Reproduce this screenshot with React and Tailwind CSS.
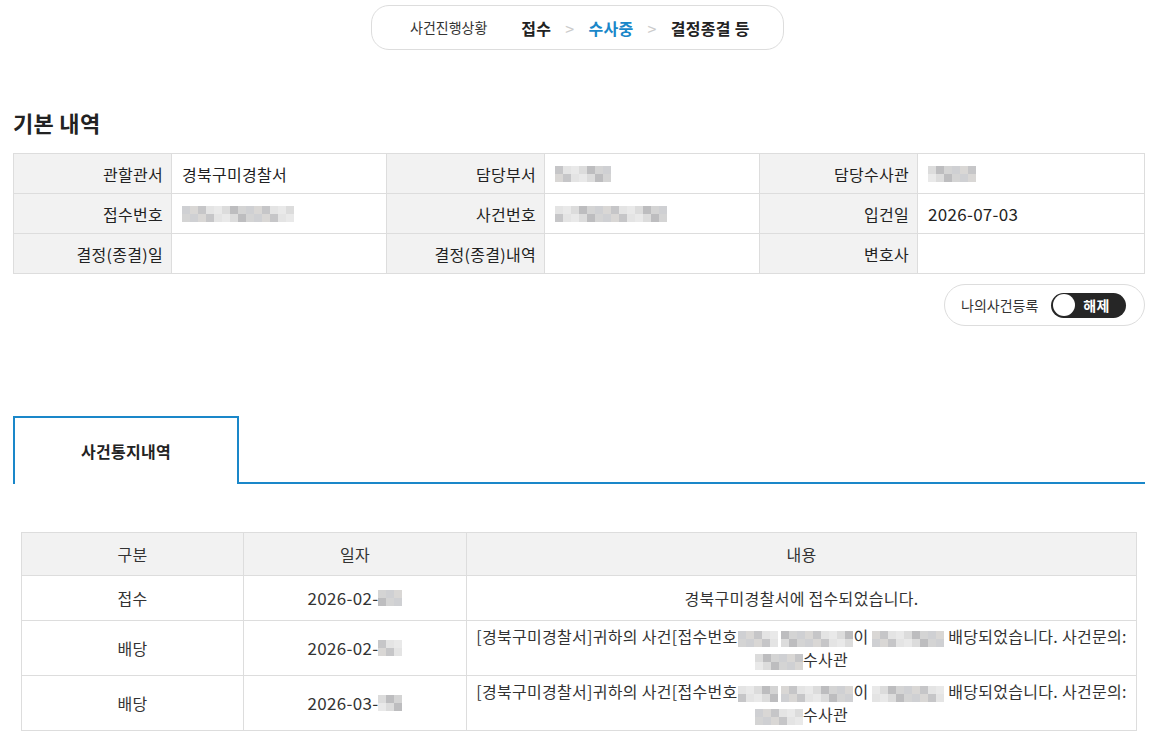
import React from 'react';

const GRAYS = ['bg-[#d4d4d4]', 'bg-[#c6c6c8]', 'bg-[#dcdcdc]', 'bg-[#cfd0d3]', 'bg-[#e4e4e4]', 'bg-[#bdbdbf]', 'bg-[#d9d7d5]', 'bg-[#e9e9e9]'];

// pixelated placeholder for masked text
const Blur = ({ cells = 6, seed = 0 }) => (
  <span className="inline-flex flex-col align-middle">
    {[0, 1].map((r) => (
      <span key={r} className="flex">
        {Array.from({ length: cells }).map((_, i) => (
          <span key={i} className={`w-[8px] h-[8px] ${GRAYS[(i * 3 + r * 5 + seed) % GRAYS.length]}`} />
        ))}
      </span>
    ))}
  </span>
);

const Label = ({ children }) => (
  <div className="bg-[#f2f2f2] border-r border-b border-[#dddddd] flex items-center justify-end pr-[8px] h-[40px]">{children}</div>
);
const Value = ({ children }) => (
  <div className="border-r border-b border-[#dddddd] flex items-center pl-[10px] h-[40px]">{children}</div>
);

const rows = [
  { kind: '접수', date: '2026-02-', text: null },
  { kind: '배당', date: '2026-02-', text: 'assign' },
  { kind: '배당', date: '2026-03-', text: 'assign' },
];

export default function App() {
  return (
    <div className="w-[1155px] min-h-[754px] bg-white text-[#222] font-['Noto_Sans_CJK_KR','Noto_Sans',sans-serif] text-[16px] tracking-[0.3px]">
      <div className="flex justify-center pt-[5px]">
        <div className="w-[413px] h-[45px] border border-[#dddddd] rounded-[18px] flex items-center pl-[38px] gap-[34px]">
          <span className="text-[14px] text-[#333] tracking-normal">사건진행상황</span>
          <div className="flex items-center gap-[14px] text-[16px] font-bold">
            <span>접수</span>
            <span className="text-[#cccccc] font-normal">&gt;</span>
            <span className="text-[#1a87c9]">수사중</span>
            <span className="text-[#cccccc] font-normal">&gt;</span>
            <span>결정종결 등</span>
          </div>
        </div>
      </div>

      <div className="px-[13px] pr-[10px]">
        <h2 className="text-[22px] font-bold mt-[57px] leading-[30px]">기본 내역</h2>
        <div className="mt-[16px] grid grid-cols-[158px_215px_158px_215px_158px_1fr] border-t border-l border-[#dddddd]">
          <Label>관할관서</Label>
          <Value>경북구미경찰서</Value>
          <Label>담당부서</Label>
          <Value><Blur cells={7} seed={1} /></Value>
          <Label>담당수사관</Label>
          <Value><Blur cells={6} seed={2} /></Value>

          <Label>접수번호</Label>
          <Value><Blur cells={14} seed={3} /></Value>
          <Label>사건번호</Label>
          <Value><Blur cells={14} seed={4} /></Value>
          <Label>입건일</Label>
          <Value><span className="text-[17px]">2026-07-03</span></Value>

          <Label>결정(종결)일</Label>
          <Value />
          <Label>결정(종결)내역</Label>
          <Value />
          <Label>변호사</Label>
          <Value />
        </div>

        <div className="flex justify-end mt-[10px]">
          <div className="w-[201px] h-[42px] border border-[#dddddd] rounded-full flex items-center pl-[16px] gap-[13px]">
            <span className="text-[14px] text-[#333] tracking-normal">나의사건등록</span>
            <div className="w-[75px] h-[25px] rounded-full bg-[#262626] flex items-center pl-[2px]">
              <span className="w-[22px] h-[22px] rounded-full bg-white" />
              <span className="text-white text-[14px] font-bold ml-[8px]">해제</span>
            </div>
          </div>
        </div>

        <div className="mt-[90px] flex">
          <div className="w-[226px] h-[68px] border-2 border-b-0 border-[#1a87c9] flex items-center justify-center font-bold text-[16px]">
            사건통지내역
          </div>
          <div className="flex-1 border-b-2 border-[#1a87c9]" />
        </div>

        <div className="mx-[8px] mt-[48px] mb-[24px] grid grid-cols-[222px_223px_1fr] border-t border-l border-[#dddddd] text-[#333] text-center">
          <div className="h-[43px] bg-[#f2f2f2] border-r border-b border-[#dddddd] flex items-center justify-center">구분</div>
          <div className="h-[43px] bg-[#f2f2f2] border-r border-b border-[#dddddd] flex items-center justify-center">일자</div>
          <div className="h-[43px] bg-[#f2f2f2] border-r border-b border-[#dddddd] flex items-center justify-center">내용</div>
          {rows.map((r, i) => (
            <React.Fragment key={i}>
              <div className={`${r.text ? 'h-[55px]' : 'h-[45px]'} border-r border-b border-[#dddddd] flex items-center justify-center`}>{r.kind}</div>
              <div className={`${r.text ? 'h-[55px]' : 'h-[45px]'} border-r border-b border-[#dddddd] flex items-center justify-center text-[17px]`}>
                {r.date}<Blur cells={3} seed={i} />
              </div>
              <div className={`${r.text ? 'h-[55px]' : 'h-[45px]'} border-r border-b border-[#dddddd] flex items-center justify-center leading-[23px] px-[2px]`}>
                {r.text ? (
                  <p>
                    [경북구미경찰서]귀하의 사건[접수번호<Blur cells={5} seed={i + 2} /> <Blur cells={9} seed={i + 4} />이 <Blur cells={9} seed={i + 5} /> 배당되었습니다. 사건문의:
                    <br />
                    <Blur cells={6} seed={i + 1} />수사관
                  </p>
                ) : (
                  '경북구미경찰서에 접수되었습니다.'
                )}
              </div>
            </React.Fragment>
          ))}
        </div>
      </div>
    </div>
  );
}
